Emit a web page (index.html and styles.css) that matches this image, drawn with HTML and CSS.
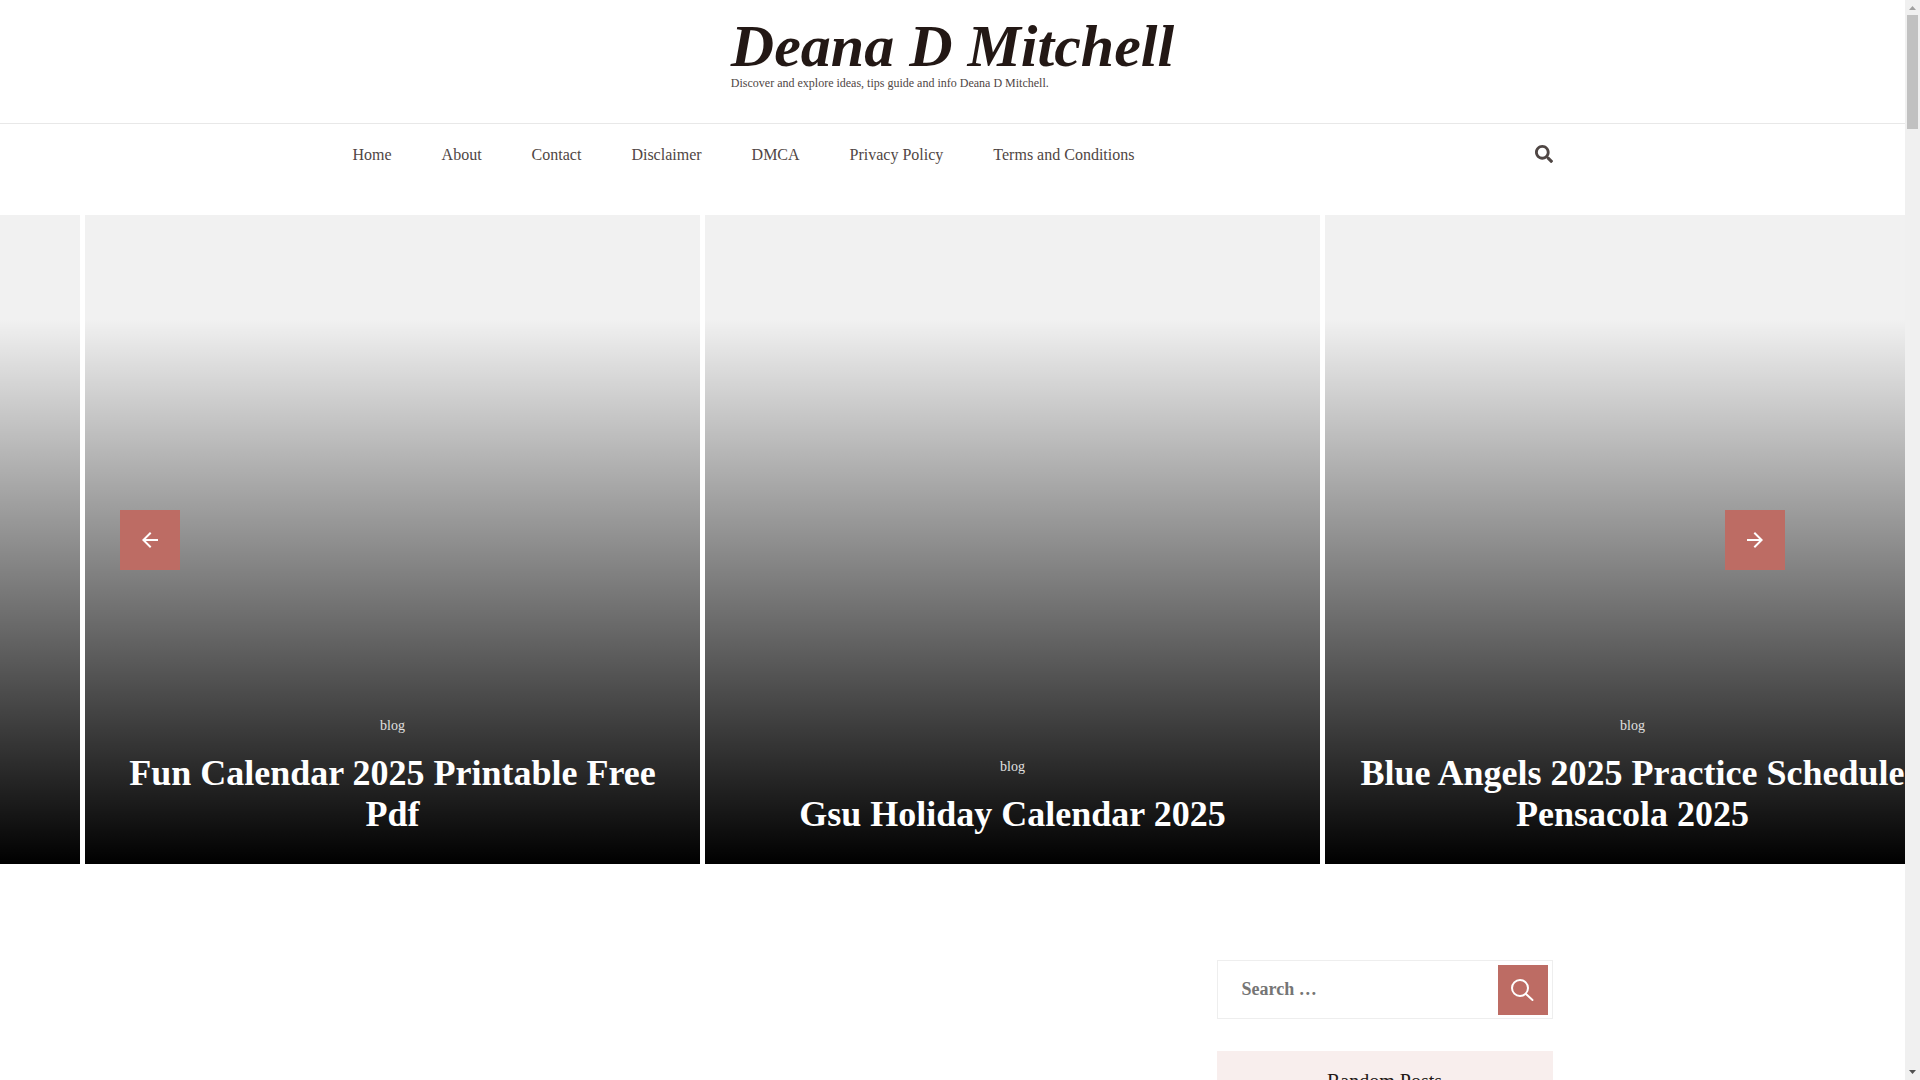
FILE: index.html
```html
<!DOCTYPE html>
<html lang="en">
  <head>
    <meta charset="UTF-8">
    <title>Deana D Mitchell</title>
    <link rel="stylesheet" href="styles.css">
  </head>
  <body>
    <div class="page">
      <header class="site-header">
        <div class="site-branding">
          <h1 class="site-title"><a href="#">Deana D Mitchell</a></h1>
          <p class="site-description">Discover and explore ideas, tips guide and info Deana D Mitchell.</p>
        </div>
      </header>

      <div class="header-bottom">
        <div class="container nav-row">
          <nav class="main-nav">
            <a href="#">Home</a>
            <a href="#">About</a>
            <a href="#">Contact</a>
            <a href="#">Disclaimer</a>
            <a href="#">DMCA</a>
            <a href="#">Privacy Policy</a>
            <a href="#">Terms and Conditions</a>
          </nav>
          <button type="button" class="search-toggle" aria-label="Open search">
            <svg width="18" height="18" viewBox="0 0 512 512" fill="currentColor">
              <path d="M505 442.700 405.300 343c-4.500-4.500-10.600-7-17-7H372c27.600-35.300 44-79.700 44-128C416 93.100 322.900 0 208 0S0 93.100 0 208s93.100 208 208 208c48.300 0 92.700-16.400 128-44v16.300c0 6.400 2.500 12.500 7 17l99.700 99.700c9.400 9.400 24.600 9.400 33.900 0l28.300-28.300c9.400-9.400 9.400-24.600.1-34zM208 336c-70.700 0-128-57.200-128-128 0-70.700 57.200-128 128-128 70.700 0 128 57.200 128 128 0 70.700-57.200 128-128 128z"/>
            </svg>
          </button>
        </div>
      </div>

      <section class="banner">
        <div class="slides">
          <article class="slide"></article>
          <article class="slide">
            <a class="slide-cat" href="#">blog</a>
            <h2 class="slide-title"><a href="#">Fun Calendar 2025 Printable Free Pdf</a></h2>
          </article>
          <article class="slide">
            <a class="slide-cat" href="#">blog</a>
            <h2 class="slide-title"><a href="#">Gsu Holiday Calendar 2025</a></h2>
          </article>
          <article class="slide">
            <a class="slide-cat" href="#">blog</a>
            <h2 class="slide-title"><a href="#">Blue Angels 2025 Practice Schedule Pensacola 2025</a></h2>
          </article>
        </div>
        <button type="button" class="arrow arrow-prev" aria-label="Previous">
          <svg width="16" height="16" viewBox="0 0 16 16" fill="currentColor">
            <path d="M16 7H3.830l5.590-5.590L8 0 0 8l8 8 1.410-1.410L3.830 9H16z"/>
          </svg>
        </button>
        <button type="button" class="arrow arrow-next" aria-label="Next">
          <svg width="16" height="16" viewBox="0 0 16 16" fill="currentColor">
            <path d="M0 7h12.170L6.580 1.410 8 0l8 8-8 8-1.410-1.410L12.170 9H0z"/>
          </svg>
        </button>
      </section>

      <div class="container content">
        <main class="primary"></main>
        <aside class="sidebar">
          <form class="search-form">
            <input type="search" placeholder="Search …" aria-label="Search">
            <button type="submit" aria-label="Search">
              <svg width="24" height="24" viewBox="0 0 24 24" fill="none" stroke="currentColor" stroke-width="2" stroke-linecap="round">
                <circle cx="9" cy="10" r="8"/>
                <path d="M15 16l6.500 6"/>
              </svg>
            </button>
          </form>
          <section class="widget">
            <h2 class="widget-title">Random Posts</h2>
          </section>
        </aside>
      </div>
    </div>

    <div class="scrollbar">
      <svg width="15" height="15" viewBox="0 0 15 15"><path fill="#a0a0a0" d="M4 10h7L7.500 6z"/></svg>
      <div class="scroll-thumb"></div>
      <svg class="scroll-down" width="15" height="15" viewBox="0 0 15 15"><path fill="#505050" d="M4 5h7L7.500 9z"/></svg>
    </div>
  </body>
</html>
```

FILE: styles.css
```css
* {
  box-sizing: border-box;
}

body {
  display: flex;
  height: 100vh;
  margin: 0;
  overflow: hidden;
  background: #fff;
  color: #231815;
  font-family: "Liberation Serif", "Times New Roman", serif;
  font-size: 16px;
}

a {
  color: inherit;
  text-decoration: none;
}

h1,
h2,
p {
  margin: 0;
}

button {
  display: flex;
  align-items: center;
  justify-content: center;
  padding: 0;
  border: none;
  cursor: pointer;
}

.page {
  flex: 1;
  min-width: 0;
  overflow: hidden;
}

.container {
  max-width: 1200px;
  margin: 0 auto;
}

/* Header */
.site-header {
  display: flex;
  justify-content: center;
  padding: 16px 0 32px;
  border-bottom: 1px solid #e8e8e8;
}

.site-title {
  font-size: 60px;
  font-style: italic;
  font-weight: 700;
  line-height: 60px;
}

.site-description {
  color: #4f4644;
  font-size: 12px;
  line-height: 15px;
}

.header-bottom {
  padding: 16px 0 46px;
}

.nav-row {
  display: flex;
  align-items: center;
  justify-content: space-between;
}

.main-nav {
  display: flex;
  gap: 50px;
  color: #4f4644;
  line-height: 29px;
}

.search-toggle {
  padding-bottom: 2px;
  background: none;
  color: #4f4644;
}

/* Banner slider */
.banner {
  position: relative;
  overflow: hidden;
}

.slides {
  display: flex;
  gap: 5px;
  margin-left: -535px;
}

.slide {
  display: flex;
  flex: 0 0 615px;
  flex-direction: column;
  align-items: center;
  justify-content: flex-end;
  height: 649px;
  padding: 0 30px 29px;
  background: linear-gradient(to bottom, transparent 16%, #000 100%) #f1f1f1;
  color: #fff;
  text-align: center;
}

.slide-cat {
  margin-bottom: 17px;
  color: #e0e0e0;
  font-size: 14px;
  line-height: 20px;
}

.slide-title {
  font-size: 36px;
  line-height: 41px;
}

.arrow {
  position: absolute;
  top: 50%;
  width: 60px;
  height: 60px;
  margin-top: -30px;
  background: #bd6c64;
  color: #fff;
}

.arrow-prev {
  left: 120px;
}

.arrow-next {
  right: 120px;
}

/* Content */
.content {
  display: flex;
  padding-top: 96px;
}

.primary {
  flex: 1;
}

.sidebar {
  width: 28%;
}

.search-form {
  display: flex;
  padding: 4px 4px 3px;
  border: 1px solid #eee;
}

.search-form input {
  flex: 1;
  min-width: 0;
  padding: 0 0 2px 20px;
  border: none;
  outline: none;
  background: none;
  font-family: inherit;
  font-size: 18px;
  font-weight: 700;
}

.search-form input::placeholder {
  color: #757575;
}

.search-form button {
  width: 50px;
  height: 50px;
  background: #bd6c64;
  color: #fff;
}

.widget {
  margin-top: 32px;
}

.widget-title {
  padding: 15px;
  background: #f8eeed;
  font-size: 20px;
  font-weight: 400;
  line-height: 30px;
  text-align: center;
}

/* Scrollbar */
.scrollbar {
  display: flex;
  flex-direction: column;
  width: 15px;
  background: #f0f0f0;
}

.scroll-thumb {
  height: 114px;
  margin: 0 2px;
  background: #c1c1c1;
}

.scroll-down {
  margin-top: auto;
}
```
